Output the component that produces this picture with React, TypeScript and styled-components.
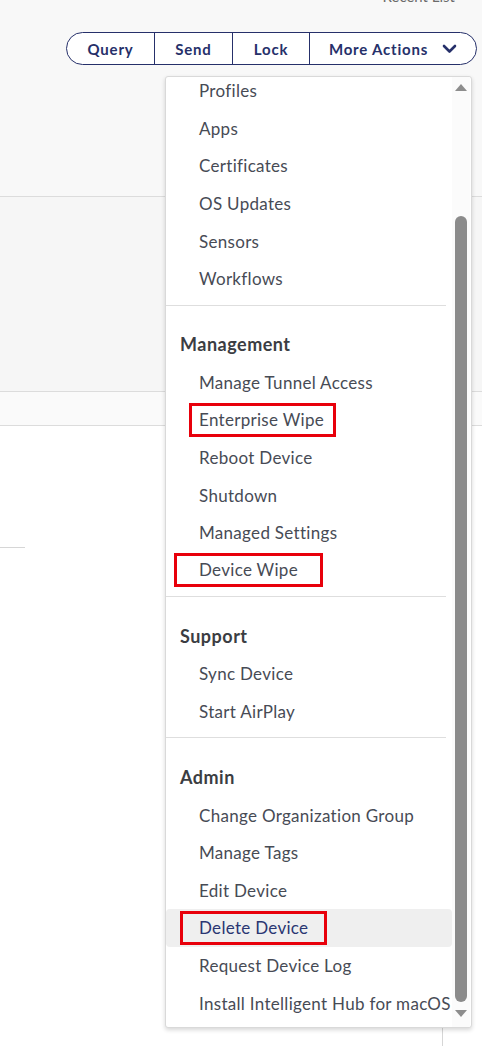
import React from "react";
import styled, { createGlobalStyle } from "styled-components";

const GlobalStyle = createGlobalStyle`
  html, body {
    margin: 0;
    padding: 0;
    background: #ffffff;
  }
  body {
    font-family: "Lato", "Liberation Sans", sans-serif;
  }
`;

const Page = styled.div`
  position: relative;
  width: 482px;
  height: 1046px;
  overflow: hidden;
  background: #ffffff;
`;

const TopBar = styled.header`
  height: 196px;
  background: #f8f8f8;
  border-bottom: 1px solid #dcdcdc;
  display: flex;
  flex-direction: column;
  align-items: flex-end;
  padding-right: 5px;
`;

const RecentLink = styled.a`
  margin-top: -13px;
  margin-right: 22px;
  height: 18px;
  line-height: 18px;
  font-size: 15px;
  color: #6b6b6b;
`;

const ActionGroup = styled.div`
  margin-top: 27px;
  display: flex;
  height: 31px;
  border: 1.5px solid #26306a;
  border-radius: 18px;
  overflow: hidden;
  background: #ffffff;
`;

const ActionButton = styled.button<{ $w: number }>`
  all: unset;
  box-sizing: border-box;
  width: ${(p) => p.$w}px;
  display: flex;
  align-items: center;
  justify-content: center;
  gap: 14px;
  font-family: "Lato", "Liberation Sans", sans-serif;
  font-weight: 700;
  font-size: 15px;
  letter-spacing: 0.8px;
  color: #26306a;
  & + & {
    border-left: 1.5px solid #26306a;
  }
`;

const Panel = styled.section`
  height: 194px;
  background: #f6f6f6;
  border-bottom: 1px solid #dcdcdc;
`;

const Band = styled.div`
  height: 33px;
  background: #fafafa;
  border-bottom: 1px solid #dcdcdc;
`;

const Lower = styled.div`
  display: flex;
  height: 620px;
`;

const LowerMain = styled.div`
  width: 442px;
  border-right: 1px solid #d6d6d6;
`;

const ShortRule = styled.hr`
  width: 25px;
  margin: 121px 0 0;
  border: none;
  border-top: 1px solid #d6d6d6;
`;

/* dropdown */

const Menu = styled.div`
  position: absolute;
  top: 76px;
  left: 165px;
  width: 307px;
  height: 952px;
  box-sizing: border-box;
  background: #ffffff;
  border: 1px solid #d9d9d9;
  border-radius: 3px;
  box-shadow: 0 2px 4px rgba(0, 0, 0, 0.16);
  display: flex;
  overflow: hidden;
`;

const MenuList = styled.div`
  flex: 1;
  margin-top: -5px;
`;

const Section = styled.div<{ $first?: boolean }>`
  padding: ${(p) => (p.$first ? "0" : "19px")} 0 7px;
  margin-right: 6px;
  border-top: ${(p) => (p.$first ? "none" : "1px solid #dedede")};
`;

const SectionTitle = styled.div`
  height: 39px;
  display: flex;
  align-items: center;
  padding-left: 14px;
  font-size: 18px;
  font-weight: 700;
  letter-spacing: 0.5px;
  color: #3b3d42;
`;

const Item = styled.div<{ $active?: boolean }>`
  height: 37.6px;
  display: flex;
  align-items: center;
  padding-left: 33px;
  margin-right: -6px;
  border-radius: 4px;
  font-size: 17px;
  letter-spacing: 0.3px;
  white-space: nowrap;
  color: ${(p) => (p.$active ? "#2a3672" : "#474b55")};
  background: ${(p) => (p.$active ? "#efefef" : "transparent")};
`;

const Marked = styled.span<{ $l: number; $r: number }>`
  position: relative;
  line-height: 34px;
  &::after {
    content: "";
    position: absolute;
    top: 0;
    bottom: 0;
    left: ${(p) => -p.$l}px;
    right: ${(p) => -p.$r}px;
    border: 3px solid #e8000b;
  }
`;

const ScrollTrack = styled.div`
  width: 18px;
  margin-right: 1px;
  display: flex;
  flex-direction: column;
  align-items: center;
  background: #fbfbfb;
`;

const Arrow = styled.div<{ $down?: boolean }>`
  width: 0;
  height: 0;
  margin: ${(p) => (p.$down ? "8px 0 0" : "7px 0 0")};
  border-left: 6px solid transparent;
  border-right: 6px solid transparent;
  ${(p) =>
    p.$down ? "border-top: 7px solid #8d8d8d;" : "border-bottom: 7px solid #8d8d8d;"}
`;

const Thumb = styled.div`
  width: 12px;
  margin-top: 125px;
  height: 786px;
  border-radius: 6px;
  background: #8b8b8b;
`;

type Entry = { label: string; mark?: [number, number]; active?: boolean };
type Group = { title?: string; items: Entry[] };

const groups: Group[] = [
  {
    items: [
      { label: "Profiles" },
      { label: "Apps" },
      { label: "Certificates" },
      { label: "OS Updates" },
      { label: "Sensors" },
      { label: "Workflows" },
    ],
  },
  {
    title: "Management",
    items: [
      { label: "Manage Tunnel Access" },
      { label: "Enterprise Wipe", mark: [10, 12] },
      { label: "Reboot Device" },
      { label: "Shutdown" },
      { label: "Managed Settings" },
      { label: "Device Wipe", mark: [25, 25] },
    ],
  },
  {
    title: "Support",
    items: [{ label: "Sync Device" }, { label: "Start AirPlay" }],
  },
  {
    title: "Admin",
    items: [
      { label: "Change Organization Group" },
      { label: "Manage Tags" },
      { label: "Edit Device" },
      { label: "Delete Device", mark: [19, 19], active: true },
      { label: "Request Device Log" },
      { label: "Install Intelligent Hub for macOS" },
    ],
  },
];

const Chevron = () => (
  <svg width="15" height="10" viewBox="0 0 15 10" fill="none">
    <polyline
      points="2,2 7.5,7.5 13,2"
      stroke="#26306a"
      strokeWidth="2.6"
      strokeLinecap="round"
      strokeLinejoin="round"
    />
  </svg>
);

const App: React.FC = () => {
  return (
    <Page>
      <GlobalStyle />
      <TopBar>
        <RecentLink>Recent List</RecentLink>
        <ActionGroup>
          <ActionButton $w={87}>Query</ActionButton>
          <ActionButton $w={78}>Send</ActionButton>
          <ActionButton $w={77}>Lock</ActionButton>
          <ActionButton $w={167}>
            More Actions
            <Chevron />
          </ActionButton>
        </ActionGroup>
      </TopBar>
      <Panel />
      <Band />
      <Lower>
        <LowerMain>
          <ShortRule />
        </LowerMain>
      </Lower>

      <Menu>
        <MenuList>
          {groups.map((g, i) => (
            <Section key={i} $first={i === 0}>
              {g.title && <SectionTitle>{g.title}</SectionTitle>}
              {g.items.map((it) => (
                <Item key={it.label} $active={it.active}>
                  {it.mark ? (
                    <Marked $l={it.mark[0]} $r={it.mark[1]}>
                      {it.label}
                    </Marked>
                  ) : (
                    it.label
                  )}
                </Item>
              ))}
            </Section>
          ))}
        </MenuList>
        <ScrollTrack>
          <Arrow />
          <Thumb />
          <Arrow $down />
        </ScrollTrack>
      </Menu>
    </Page>
  );
};

export default App;
